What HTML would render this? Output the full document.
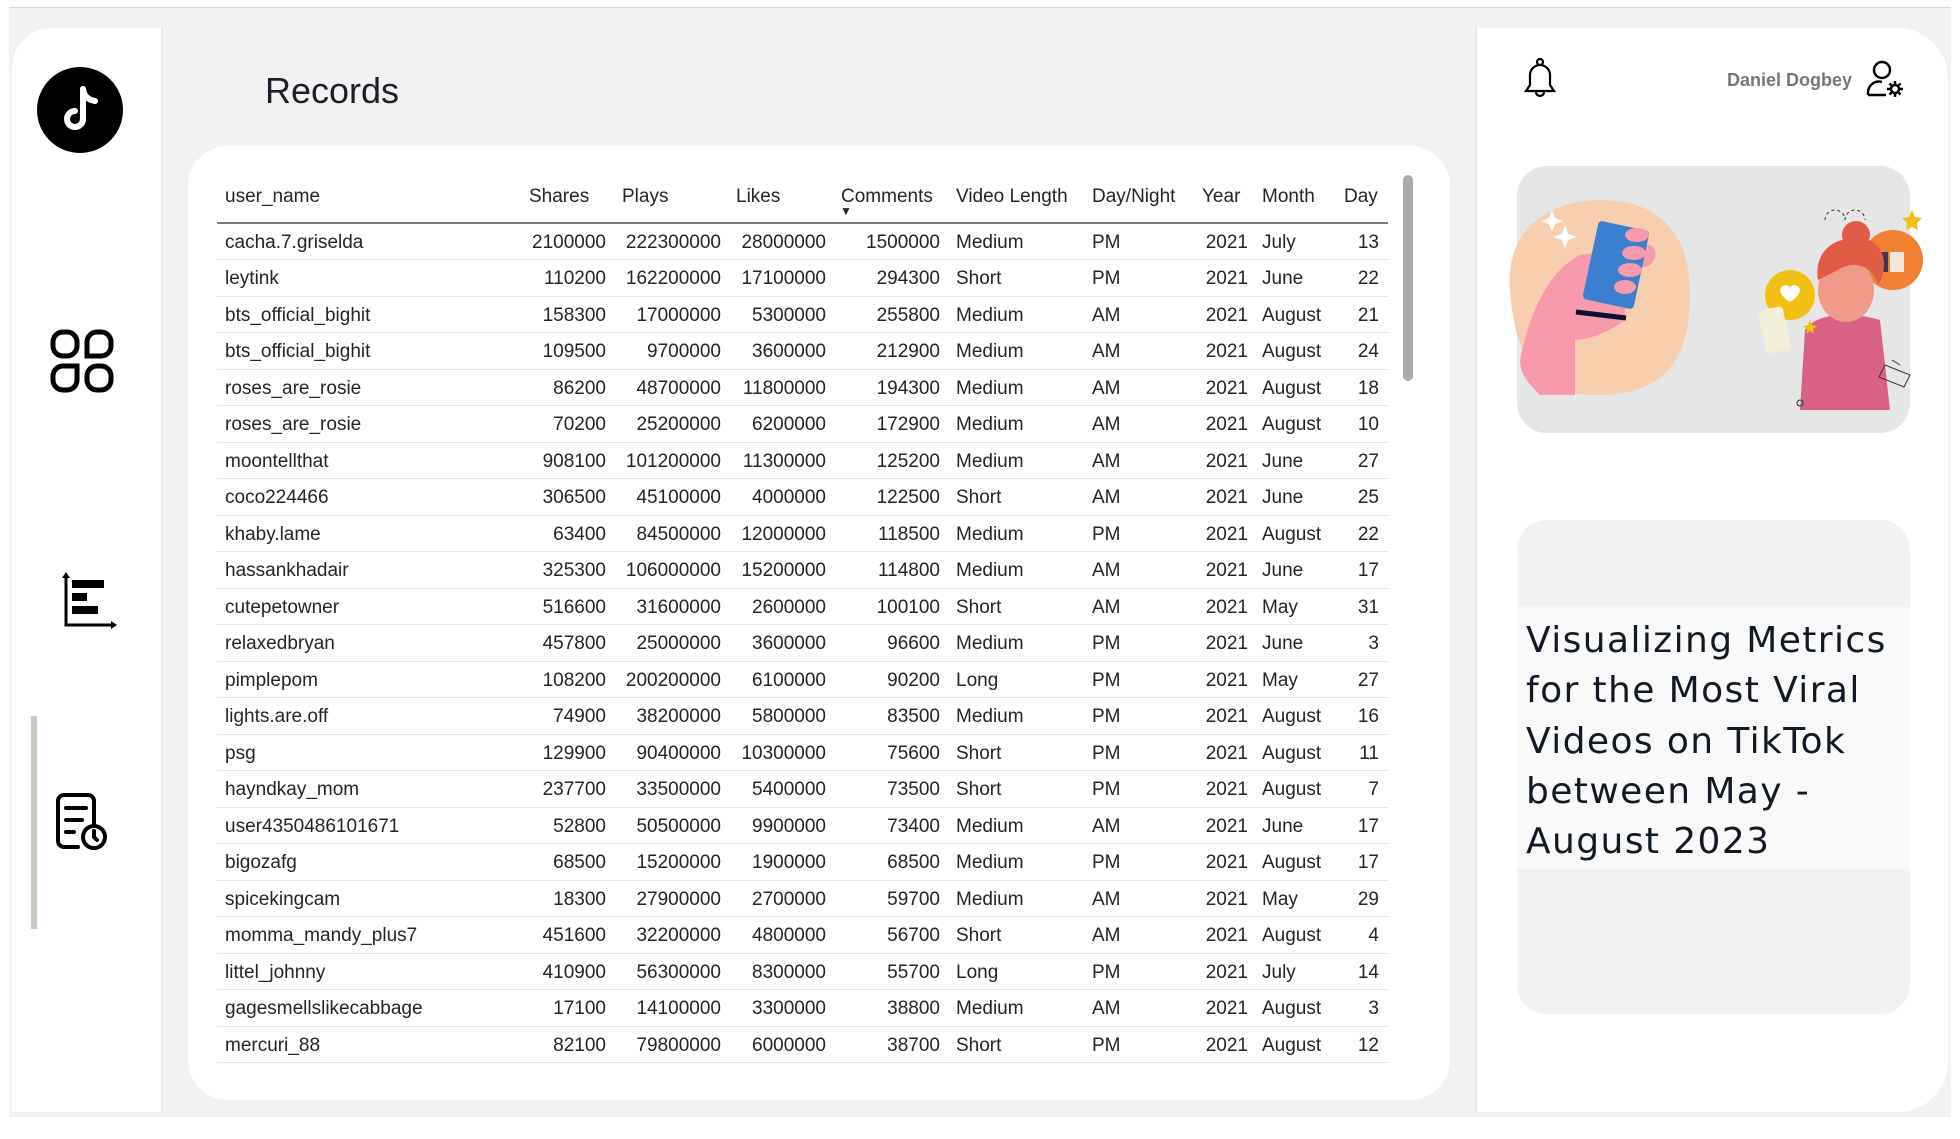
<!DOCTYPE html>
<html><head><meta charset="utf-8"><style>
*{margin:0;padding:0;box-sizing:border-box}
body{width:1960px;height:1139px;background:#fff;position:relative;overflow:hidden;font-family:"Liberation Sans",sans-serif;color:#252423}
.frame{position:absolute;left:9px;top:7px;width:1942px;height:1110px;border-top:1px solid #d8d8d8;background:#f2f2f2}
.side{position:absolute;left:12px;top:28px;width:151px;height:1084px;background:#fff;border-radius:40px 0 0 0;border-right:2px solid #e8e8e8}
.card{position:absolute;left:188px;top:146px;width:1262px;height:954px;background:#fff;border-radius:40px}
.right{position:absolute;left:1475px;top:28px;width:473px;height:1084px;background:#fff;border-radius:0 50px 50px 0;border-left:2px solid #e8e8e8}
table{position:absolute;left:217px;top:171px;border-collapse:collapse;font-size:19px;table-layout:fixed;width:1171px}
th{font-weight:normal;text-align:left;height:52px;border-bottom:2px solid #7a7a7a;vertical-align:middle;white-space:nowrap}
td{height:36.5px;border-bottom:1px solid #e6e6e6;white-space:nowrap;padding:0;padding-top:3px}
td.r{text-align:right}
</style></head><body>
<div class="frame"></div>
<div class="side"></div>
<div class="card"></div>
<div class="right"></div>

<svg style="position:absolute;left:37px;top:67px" width="86" height="86" viewBox="0 0 86 86"><circle cx="43" cy="43" r="43" fill="#000"/><path d="M46 22v30a8 8 0 1 1-8-8" stroke="#fff" stroke-width="6" fill="none" stroke-linecap="round"/><path d="M46 22c1 7 5 11 12 12" stroke="#fff" stroke-width="6" fill="none" stroke-linecap="round"/></svg>
<svg style="position:absolute;left:50px;top:329px" width="64" height="64" viewBox="0 0 64 64" fill="none" stroke="#000" stroke-width="5"><rect x="3" y="3" width="24" height="24" rx="10"/><path d="M37 27V13a10 10 0 0 1 10-10h4a10 10 0 0 1 10 10v4a10 10 0 0 1-10 10z"/><path d="M27 37v14a10 10 0 0 1-10 10h-4a10 10 0 0 1-10-10v-4a10 10 0 0 1 10-10z"/><rect x="37" y="37" width="24" height="24" rx="10"/></svg>
<svg style="position:absolute;left:60px;top:570px" width="60" height="60" viewBox="0 0 60 60"><path d="M6 4v51h49" stroke="#000" stroke-width="3" fill="none"/><path d="M2 8l4-6 4 6zM51 51l6 4-6 4z" fill="#000"/><rect x="12" y="10" width="32" height="8"/><rect x="12" y="23" width="15" height="8"/><rect x="12" y="36" width="26" height="8"/></svg>
<div style="position:absolute;left:31px;top:716px;width:6px;height:213px;background:#c8c8c0"></div>
<svg style="position:absolute;left:54px;top:791px" width="56" height="62" viewBox="0 0 56 62" fill="none" stroke="#000" stroke-width="4" stroke-linecap="round"><path d="M24 56H10a6 6 0 0 1-6-6V10a6 6 0 0 1 6-6h24a6 6 0 0 1 6 6v24"/><path d="M12 17h20M12 29h16M12 41h8"/><circle cx="40" cy="46" r="11"/><path d="M40 40v6l3 3"/></svg>

<div style="position:absolute;left:265px;top:70px;font-size:36px;color:#1a1f2b">Records</div>

<table>
<colgroup><col style="width:303px"><col style="width:92px"><col style="width:115px"><col style="width:105px"><col style="width:114px"><col style="width:140px"><col style="width:110px"><col style="width:58px"><col style="width:82px"><col style="width:52px"></colgroup>
<tr><th style="padding-left:8px">user_name</th><th style="padding-left:9px">Shares</th><th style="padding-left:10px">Plays</th><th style="padding-left:9px">Likes</th><th style="padding-left:9px;position:relative">Comments<span style="position:absolute;left:8px;bottom:4px;font-size:12px">▼</span></th><th style="padding-left:10px">Video Length</th><th style="padding-left:6px">Day/Night</th><th style="padding-left:6px">Year</th><th style="padding-left:8px">Month</th><th style="padding-left:8px">Day</th></tr>
<tr><td style="padding-left:8px">cacha.7.griselda</td><td class="r" style="padding-right:6px">2100000</td><td class="r" style="padding-right:6px">222300000</td><td class="r" style="padding-right:6px">28000000</td><td class="r" style="padding-right:6px">1500000</td><td style="padding-left:10px">Medium</td><td style="padding-left:6px">PM</td><td class="r" style="padding-right:6px">2021</td><td style="padding-left:8px">July</td><td class="r" style="padding-right:9px">13</td></tr>
<tr><td style="padding-left:8px">leytink</td><td class="r" style="padding-right:6px">110200</td><td class="r" style="padding-right:6px">162200000</td><td class="r" style="padding-right:6px">17100000</td><td class="r" style="padding-right:6px">294300</td><td style="padding-left:10px">Short</td><td style="padding-left:6px">PM</td><td class="r" style="padding-right:6px">2021</td><td style="padding-left:8px">June</td><td class="r" style="padding-right:9px">22</td></tr>
<tr><td style="padding-left:8px">bts_official_bighit</td><td class="r" style="padding-right:6px">158300</td><td class="r" style="padding-right:6px">17000000</td><td class="r" style="padding-right:6px">5300000</td><td class="r" style="padding-right:6px">255800</td><td style="padding-left:10px">Medium</td><td style="padding-left:6px">AM</td><td class="r" style="padding-right:6px">2021</td><td style="padding-left:8px">August</td><td class="r" style="padding-right:9px">21</td></tr>
<tr><td style="padding-left:8px">bts_official_bighit</td><td class="r" style="padding-right:6px">109500</td><td class="r" style="padding-right:6px">9700000</td><td class="r" style="padding-right:6px">3600000</td><td class="r" style="padding-right:6px">212900</td><td style="padding-left:10px">Medium</td><td style="padding-left:6px">AM</td><td class="r" style="padding-right:6px">2021</td><td style="padding-left:8px">August</td><td class="r" style="padding-right:9px">24</td></tr>
<tr><td style="padding-left:8px">roses_are_rosie</td><td class="r" style="padding-right:6px">86200</td><td class="r" style="padding-right:6px">48700000</td><td class="r" style="padding-right:6px">11800000</td><td class="r" style="padding-right:6px">194300</td><td style="padding-left:10px">Medium</td><td style="padding-left:6px">AM</td><td class="r" style="padding-right:6px">2021</td><td style="padding-left:8px">August</td><td class="r" style="padding-right:9px">18</td></tr>
<tr><td style="padding-left:8px">roses_are_rosie</td><td class="r" style="padding-right:6px">70200</td><td class="r" style="padding-right:6px">25200000</td><td class="r" style="padding-right:6px">6200000</td><td class="r" style="padding-right:6px">172900</td><td style="padding-left:10px">Medium</td><td style="padding-left:6px">AM</td><td class="r" style="padding-right:6px">2021</td><td style="padding-left:8px">August</td><td class="r" style="padding-right:9px">10</td></tr>
<tr><td style="padding-left:8px">moontellthat</td><td class="r" style="padding-right:6px">908100</td><td class="r" style="padding-right:6px">101200000</td><td class="r" style="padding-right:6px">11300000</td><td class="r" style="padding-right:6px">125200</td><td style="padding-left:10px">Medium</td><td style="padding-left:6px">AM</td><td class="r" style="padding-right:6px">2021</td><td style="padding-left:8px">June</td><td class="r" style="padding-right:9px">27</td></tr>
<tr><td style="padding-left:8px">coco224466</td><td class="r" style="padding-right:6px">306500</td><td class="r" style="padding-right:6px">45100000</td><td class="r" style="padding-right:6px">4000000</td><td class="r" style="padding-right:6px">122500</td><td style="padding-left:10px">Short</td><td style="padding-left:6px">AM</td><td class="r" style="padding-right:6px">2021</td><td style="padding-left:8px">June</td><td class="r" style="padding-right:9px">25</td></tr>
<tr><td style="padding-left:8px">khaby.lame</td><td class="r" style="padding-right:6px">63400</td><td class="r" style="padding-right:6px">84500000</td><td class="r" style="padding-right:6px">12000000</td><td class="r" style="padding-right:6px">118500</td><td style="padding-left:10px">Medium</td><td style="padding-left:6px">PM</td><td class="r" style="padding-right:6px">2021</td><td style="padding-left:8px">August</td><td class="r" style="padding-right:9px">22</td></tr>
<tr><td style="padding-left:8px">hassankhadair</td><td class="r" style="padding-right:6px">325300</td><td class="r" style="padding-right:6px">106000000</td><td class="r" style="padding-right:6px">15200000</td><td class="r" style="padding-right:6px">114800</td><td style="padding-left:10px">Medium</td><td style="padding-left:6px">AM</td><td class="r" style="padding-right:6px">2021</td><td style="padding-left:8px">June</td><td class="r" style="padding-right:9px">17</td></tr>
<tr><td style="padding-left:8px">cutepetowner</td><td class="r" style="padding-right:6px">516600</td><td class="r" style="padding-right:6px">31600000</td><td class="r" style="padding-right:6px">2600000</td><td class="r" style="padding-right:6px">100100</td><td style="padding-left:10px">Short</td><td style="padding-left:6px">AM</td><td class="r" style="padding-right:6px">2021</td><td style="padding-left:8px">May</td><td class="r" style="padding-right:9px">31</td></tr>
<tr><td style="padding-left:8px">relaxedbryan</td><td class="r" style="padding-right:6px">457800</td><td class="r" style="padding-right:6px">25000000</td><td class="r" style="padding-right:6px">3600000</td><td class="r" style="padding-right:6px">96600</td><td style="padding-left:10px">Medium</td><td style="padding-left:6px">PM</td><td class="r" style="padding-right:6px">2021</td><td style="padding-left:8px">June</td><td class="r" style="padding-right:9px">3</td></tr>
<tr><td style="padding-left:8px">pimplepom</td><td class="r" style="padding-right:6px">108200</td><td class="r" style="padding-right:6px">200200000</td><td class="r" style="padding-right:6px">6100000</td><td class="r" style="padding-right:6px">90200</td><td style="padding-left:10px">Long</td><td style="padding-left:6px">PM</td><td class="r" style="padding-right:6px">2021</td><td style="padding-left:8px">May</td><td class="r" style="padding-right:9px">27</td></tr>
<tr><td style="padding-left:8px">lights.are.off</td><td class="r" style="padding-right:6px">74900</td><td class="r" style="padding-right:6px">38200000</td><td class="r" style="padding-right:6px">5800000</td><td class="r" style="padding-right:6px">83500</td><td style="padding-left:10px">Medium</td><td style="padding-left:6px">PM</td><td class="r" style="padding-right:6px">2021</td><td style="padding-left:8px">August</td><td class="r" style="padding-right:9px">16</td></tr>
<tr><td style="padding-left:8px">psg</td><td class="r" style="padding-right:6px">129900</td><td class="r" style="padding-right:6px">90400000</td><td class="r" style="padding-right:6px">10300000</td><td class="r" style="padding-right:6px">75600</td><td style="padding-left:10px">Short</td><td style="padding-left:6px">PM</td><td class="r" style="padding-right:6px">2021</td><td style="padding-left:8px">August</td><td class="r" style="padding-right:9px">11</td></tr>
<tr><td style="padding-left:8px">hayndkay_mom</td><td class="r" style="padding-right:6px">237700</td><td class="r" style="padding-right:6px">33500000</td><td class="r" style="padding-right:6px">5400000</td><td class="r" style="padding-right:6px">73500</td><td style="padding-left:10px">Short</td><td style="padding-left:6px">PM</td><td class="r" style="padding-right:6px">2021</td><td style="padding-left:8px">August</td><td class="r" style="padding-right:9px">7</td></tr>
<tr><td style="padding-left:8px">user4350486101671</td><td class="r" style="padding-right:6px">52800</td><td class="r" style="padding-right:6px">50500000</td><td class="r" style="padding-right:6px">9900000</td><td class="r" style="padding-right:6px">73400</td><td style="padding-left:10px">Medium</td><td style="padding-left:6px">AM</td><td class="r" style="padding-right:6px">2021</td><td style="padding-left:8px">June</td><td class="r" style="padding-right:9px">17</td></tr>
<tr><td style="padding-left:8px">bigozafg</td><td class="r" style="padding-right:6px">68500</td><td class="r" style="padding-right:6px">15200000</td><td class="r" style="padding-right:6px">1900000</td><td class="r" style="padding-right:6px">68500</td><td style="padding-left:10px">Medium</td><td style="padding-left:6px">PM</td><td class="r" style="padding-right:6px">2021</td><td style="padding-left:8px">August</td><td class="r" style="padding-right:9px">17</td></tr>
<tr><td style="padding-left:8px">spicekingcam</td><td class="r" style="padding-right:6px">18300</td><td class="r" style="padding-right:6px">27900000</td><td class="r" style="padding-right:6px">2700000</td><td class="r" style="padding-right:6px">59700</td><td style="padding-left:10px">Medium</td><td style="padding-left:6px">AM</td><td class="r" style="padding-right:6px">2021</td><td style="padding-left:8px">May</td><td class="r" style="padding-right:9px">29</td></tr>
<tr><td style="padding-left:8px">momma_mandy_plus7</td><td class="r" style="padding-right:6px">451600</td><td class="r" style="padding-right:6px">32200000</td><td class="r" style="padding-right:6px">4800000</td><td class="r" style="padding-right:6px">56700</td><td style="padding-left:10px">Short</td><td style="padding-left:6px">AM</td><td class="r" style="padding-right:6px">2021</td><td style="padding-left:8px">August</td><td class="r" style="padding-right:9px">4</td></tr>
<tr><td style="padding-left:8px">littel_johnny</td><td class="r" style="padding-right:6px">410900</td><td class="r" style="padding-right:6px">56300000</td><td class="r" style="padding-right:6px">8300000</td><td class="r" style="padding-right:6px">55700</td><td style="padding-left:10px">Long</td><td style="padding-left:6px">PM</td><td class="r" style="padding-right:6px">2021</td><td style="padding-left:8px">July</td><td class="r" style="padding-right:9px">14</td></tr>
<tr><td style="padding-left:8px">gagesmellslikecabbage</td><td class="r" style="padding-right:6px">17100</td><td class="r" style="padding-right:6px">14100000</td><td class="r" style="padding-right:6px">3300000</td><td class="r" style="padding-right:6px">38800</td><td style="padding-left:10px">Medium</td><td style="padding-left:6px">AM</td><td class="r" style="padding-right:6px">2021</td><td style="padding-left:8px">August</td><td class="r" style="padding-right:9px">3</td></tr>
<tr><td style="padding-left:8px">mercuri_88</td><td class="r" style="padding-right:6px">82100</td><td class="r" style="padding-right:6px">79800000</td><td class="r" style="padding-right:6px">6000000</td><td class="r" style="padding-right:6px">38700</td><td style="padding-left:10px">Short</td><td style="padding-left:6px">PM</td><td class="r" style="padding-right:6px">2021</td><td style="padding-left:8px">August</td><td class="r" style="padding-right:9px">12</td></tr>
</table>
<div style="position:absolute;left:1403px;top:175px;width:10px;height:206px;border-radius:5px;background:#ababab"></div>

<svg style="position:absolute;left:1522px;top:57px" width="36" height="42" viewBox="0 0 36 42" fill="none" stroke="#000" stroke-width="2.2"><path d="M4 34h28l-4-6V18a10 10 0 0 0-20 0v10z"/><circle cx="18" cy="5" r="3"/><path d="M14 35a4 4 0 0 0 8 0"/></svg>
<div style="position:absolute;right:108px;top:70px;font-size:18px;font-weight:bold;color:#777">Daniel Dogbey</div>
<svg style="position:absolute;left:1865px;top:59px" width="40" height="40" viewBox="0 0 40 40" fill="none" stroke="#000" stroke-width="2.5"><circle cx="17" cy="11" r="8"/><path d="M3 36v-3a11 11 0 0 1 14-10"/><path d="M3 36h18"/><circle cx="30" cy="30" r="4"/><path d="M30 22v3M30 35v3M22 30h3M35 30h3M24.5 24.5l2 2M33.5 33.5l2 2M24.5 35.5l2-2M33.5 26.5l2-2"/></svg>

<div style="position:absolute;left:1517px;top:166px;width:393px;height:267px;background:#e6e6e6;border-radius:30px"></div>
<svg style="position:absolute;left:1500px;top:160px" width="430" height="280" viewBox="0 0 430 280">
<path d="M10 130C5 60 60 40 100 40s90 15 90 95c0 80-40 100-95 100S15 200 10 130z" fill="#f7cfae"/>
<path d="M20 200c10-50 30-90 60-105l70-10c10 5 5 20-5 22l-20 3 0 50c-20 15-40 20-50 20v55H40c-10-10-20-20-20-35z" fill="#f69aac"/>
<rect x="90" y="65" width="52" height="80" rx="4" fill="#3a7fd0" transform="rotate(12 116 105)"/>
<path d="M76 152l50 6" stroke="#0d1030" stroke-width="5"/>
<ellipse cx="137" cy="75" rx="12" ry="7" fill="#f69aac"/><ellipse cx="134" cy="93" rx="12" ry="7" fill="#f69aac"/><ellipse cx="130" cy="110" rx="12" ry="7" fill="#f69aac"/><ellipse cx="125" cy="127" rx="11" ry="7" fill="#f69aac"/>
<path d="M52 50l3 8 8 3-8 3-3 8-3-8-8-3 8-3zM65 65l3 9 9 3-9 3-3 9-3-9-9-3 9-3z" fill="#fff"/>
<circle cx="290" cy="135" r="25" fill="#f2c012"/><path d="M280 130a6 6 0 0 1 10-3 6 6 0 0 1 10 3c0 6-10 12-10 12s-10-6-10-12z" fill="#fff"/>
<circle cx="393" cy="100" r="30" fill="#ef8034"/><rect x="380" y="92" width="8" height="20" fill="#3b3653"/><path d="M390 92h14v20h-14z" fill="#f3e7d6"/>
<path d="M300 250l5-80c10-15 40-20 75-10l10 90z" fill="#d96284"/>
<ellipse cx="346" cy="130" rx="28" ry="32" fill="#f09a8a"/>
<path d="M318 120c-5-30 20-45 40-40 20-5 35 20 20 45-5-20-25-25-40-15z" fill="#e25b44"/>
<circle cx="356" cy="75" r="14" fill="#e25b44"/>
<rect x="262" y="148" width="25" height="44" rx="4" fill="#f3efd9" transform="rotate(-12 274 170)"/>
<path d="M392 200l8 5M300 240a3 3 0 1 0 0.1 0" stroke="#333" fill="none"/>
<path d="M412 50l3 7 7 1-5 5 1 7-6-3-6 3 1-7-5-5 7-1zM310 160l2 5 5 1-4 3 1 5-4-3-4 3 1-5-4-3 5-1z" fill="#f2c012"/>
<path d="M325 60a10 10 0 0 1 20 0M345 60a10 10 0 0 1 20 0" stroke="#333" stroke-dasharray="3 3" fill="none"/>
<path d="M385 205l25 10-6 12-25-10z" fill="none" stroke="#333"/>
</svg>

<div style="position:absolute;left:1517px;top:520px;width:393px;height:494px;background:#f2f2f2;border-radius:30px;overflow:hidden"><div style="position:absolute;left:0;top:87px;width:100%;height:262px;background:#f9f9f9"></div></div>
<div style="position:absolute;left:1526px;top:616px;width:390px;line-height:50.3px;color:#111a24;letter-spacing:1.4px;font-family:'DejaVu Sans','Liberation Sans',sans-serif;font-size:36px">Visualizing Metrics for the Most Viral Videos on TikTok between May - August 2023</div>
</body></html>
